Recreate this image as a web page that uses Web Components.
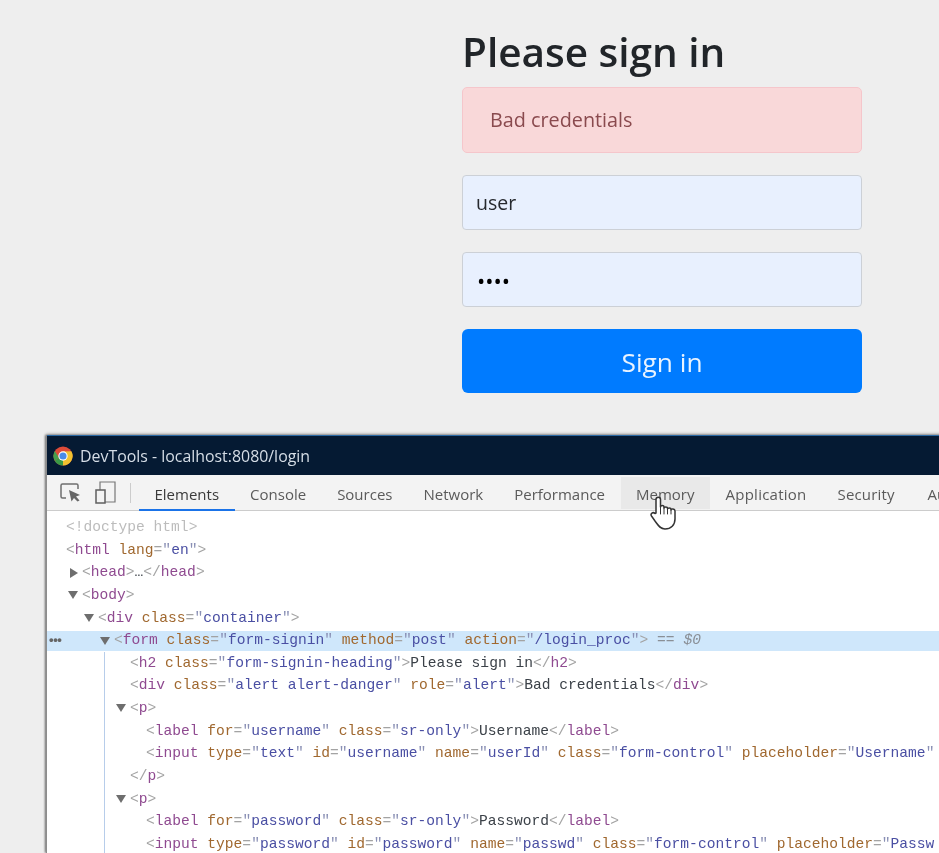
<!doctype html>
<html lang="en">
<head>
<meta charset="utf-8">
<title>Please sign in</title>
<style>
html,body{margin:0;height:853px;overflow:hidden;background:#eee}
body{font-family:"Open Sans","Noto Sans",sans-serif;width:939px}
</style>
</head>
<body>
<login-page>
  <sign-in-form>
    <form-heading>Please sign in</form-heading>
    <alert-box>Bad credentials</alert-box>
    <text-field>user</text-field>
    <text-field dots>••••</text-field>
    <primary-button>Sign in</primary-button>
  </sign-in-form>
  <devtools-window>
    <title-bar>DevTools - localhost:8080/login</title-bar>
    <tab-strip>
      <dev-tab active>Elements</dev-tab><dev-tab>Console</dev-tab><dev-tab>Sources</dev-tab><dev-tab>Network</dev-tab><dev-tab>Performance</dev-tab><dev-tab hover>Memory</dev-tab><dev-tab style="letter-spacing:.25px">Application</dev-tab><dev-tab style="letter-spacing:.15px">Security</dev-tab><dev-tab style="padding-left:17.5px">Audits</dev-tab>
    </tab-strip>
    <dom-tree>
      <dom-line depth="0" muted code='&lt;!doctype html&gt;'></dom-line>
      <dom-line depth="0" code='&lt;html lang="en"&gt;'></dom-line>
      <dom-line depth="1" arrow="right" code='&lt;head&gt;…&lt;/head&gt;'></dom-line>
      <dom-line depth="1" arrow="down" code='&lt;body&gt;'></dom-line>
      <dom-line depth="2" arrow="down" code='&lt;div class="container"&gt;'></dom-line>
      <dom-line depth="3" arrow="down" selected code='&lt;form class="form-signin" method="post" action="/login_proc"&gt;' suffix=' == $0'></dom-line>
      <dom-branch>
        <dom-line depth="0" code='&lt;h2 class="form-signin-heading"&gt;Please sign in&lt;/h2&gt;'></dom-line>
        <dom-line depth="0" code='&lt;div class="alert alert-danger" role="alert"&gt;Bad credentials&lt;/div&gt;'></dom-line>
        <dom-line depth="0" arrow="down" code='&lt;p&gt;'></dom-line>
        <dom-line depth="1" code='&lt;label for="username" class="sr-only"&gt;Username&lt;/label&gt;'></dom-line>
        <dom-line depth="1" code='&lt;input type="text" id="username" name="userId" class="form-control" placeholder="Username"'></dom-line>
        <dom-line depth="0" code='&lt;/p&gt;'></dom-line>
        <dom-line depth="0" arrow="down" code='&lt;p&gt;'></dom-line>
        <dom-line depth="1" code='&lt;label for="password" class="sr-only"&gt;Password&lt;/label&gt;'></dom-line>
        <dom-line depth="1" code='&lt;input type="password" id="password" name="passwd" class="form-control" placeholder="Passw'></dom-line>
      </dom-branch>
    </dom-tree>
    <hand-cursor></hand-cursor>
  </devtools-window>
</login-page>
<script>
function define(name, css, html, setup){
  customElements.define(name, class extends HTMLElement{
    constructor(){super();this.attachShadow({mode:'open'}).innerHTML='<style>'+css+'</style>'+html;}
    connectedCallback(){ if(setup) setup.call(this,this.shadowRoot); }
  });
}
define('login-page',':host{display:block;height:853px;overflow:hidden;filter:blur(.35px)}','<slot></slot>');
define('sign-in-form',':host{display:flex;flex-direction:column;width:400px;margin-left:462px;height:435px;color:#212529}','<slot></slot>');
define('form-heading',':host{display:block;height:87px;box-sizing:border-box;padding-top:22px;font-size:40.5px;line-height:60px;font-weight:560;color:#212529;white-space:nowrap}','<slot></slot>');
define('alert-box',':host{display:flex;align-items:center;box-sizing:border-box;height:66px;margin-bottom:22px;padding:0 0 2px 27px;background:#f9d8d9;border:1px solid #f5c6cb;border-radius:5px;color:#8a4a4e;font-size:19.8px}','<slot></slot>');
define('text-field',':host{display:flex;align-items:center;box-sizing:border-box;height:55px;margin-bottom:22px;padding:0 0 0 13px;background:#e8f0fe;border:1px solid #ccd0d6;border-radius:4px;color:#26292e;font-size:19.5px}:host([dots]){color:#000;font-size:22px;padding-left:14px}','<slot></slot>');
define('primary-button',':host{display:flex;align-items:center;justify-content:center;box-sizing:border-box;height:64px;background:#007bff;border-radius:6px;color:#e9f3ff;font-size:26.3px;padding-top:1px}','<slot></slot>');
define('devtools-window',':host{display:block;position:relative;margin-left:46px;width:1000px;height:418px;background:#fff;border-left:1px solid #8d8d8d;box-shadow:-1px 0 2px rgba(0,0,0,.45),0 -1px 3px rgba(0,0,0,.3)}','<slot></slot>');
define('title-bar',`:host{display:flex;align-items:center;height:40px;box-sizing:border-box;border-top:1px solid #2b6aa6;background:#051a33;color:#d5dde6;font-size:15.9px;padding-left:6px;gap:7px;white-space:nowrap}svg{width:20px;height:20px;flex:none}`,
`<svg viewBox="0 0 24 24"><circle cx="12" cy="12" r="11.5" fill="#dd4b39"/><path d="M12 12L2.04 17.75A11.5 11.5 0 0 0 12 23.5z" fill="#3a9a46"/><path d="M12 12V23.5A11.5 11.5 0 0 0 22 6.25L12 6.5z" fill="#f2c230"/><path d="M12 12L2.04 17.75A11.5 11.5 0 0 1 2.2 6 L7 14z" fill="#46a04d"/><circle cx="12" cy="12" r="5.6" fill="#fff"/><circle cx="12" cy="12" r="4.3" fill="#4a8be8"/></svg><slot></slot>`);
define('tab-strip',`:host{display:flex;align-items:stretch;height:36px;box-sizing:border-box;background:#f3f3f3;border-bottom:1px solid #ccc}
.tools{display:flex;align-items:center;width:92px;flex:none;box-sizing:border-box}
.tools svg{flex:none;display:block}
.sep{width:1px;height:20px;background:#ccc;margin-left:14px}
.tabs{display:flex;flex:none}`,
`<div class="tools">
<svg style="margin-left:13px" width="21" height="19" viewBox="0 0 21 19" fill="none"><path d="M6 15H2.500Q1 15 1 13.500V2.500Q1 1 2.500 1H16.500Q18 1 18 2.500V6" stroke="#6f6f6f" stroke-width="1.500"/><path d="M9 7L20 12L16 13.500L19.500 17.500L17.500 18.500L14 15L11.500 18.500z" fill="#666"/></svg>
<svg style="margin-left:14px" width="21" height="23" viewBox="0 0 21 23" fill="none"><path d="M5 9V1H20V21H10" stroke="#777" stroke-width="1.200"/><rect x="1" y="9" width="9" height="13" stroke="#5f5f5f" stroke-width="1.500"/></svg>
<div class="sep"></div></div><div class="tabs"><slot></slot></div>`);
define('dev-tab',`:host{display:flex;align-items:center;padding:2px 15.5px 0;box-sizing:border-box;height:36px;color:#5a5a5a;font-size:15px;white-space:nowrap}
:host([active]){box-shadow:inset 0 -2px 0 #1a73e8;color:#3a3a3a}
:host([hover]){background:linear-gradient(transparent 2px,#e9e9e9 2px,#e9e9e9 34px,transparent 34px)}`,'<slot></slot>');
define('dom-tree',':host{display:block;padding-top:5px;font-family:"Liberation Mono",monospace;font-size:14.6px;line-height:22.65px}','<slot></slot>');
define('dom-branch',':host{display:block;margin-left:57px;border-left:1px solid #b7cdea;--base:11px}','<slot></slot>');
function esc(s){return s.replace(/&/g,'&amp;').replace(/</g,'&lt;').replace(/>/g,'&gt;');}
function tokenize(code){
  return code.replace(/<[^>]*>?|[^<]+/g,function(part){
    if(part[0]!=='<') return '<span class="txt">'+esc(part)+'</span>';
    var closed=part.slice(-1)==='>';
    if(closed) part=part.slice(0,-1);
    var m=part.match(/^(<\/?!?)([\w-]+)(.*)$/);
    var attrs=m[3].replace(/(\s+)([\w-]+)(?:(=)("[^"]*"?))?/g,function(a,sp,n,eq,v){
      var out=sp+'<span class="an">'+n+'</span>';
      if(eq){
        var end=v.length>1&&v.slice(-1)==='"';
        out+='<span class="br">=</span><span class="qt">"</span><span class="av">'+esc(end?v.slice(1,-1):v.slice(1))+'</span>'+(end?'<span class="qt">"</span>':'');
      }
      return out;
    });
    return '<span class="br">'+esc(m[1])+'</span><span class="tg">'+m[2]+'</span>'+attrs+(closed?'<span class="br">&gt;</span>':'');
  });
}
define('dom-line',`:host{display:flex;align-items:center;height:22.65px;position:relative;white-space:pre}
:host([selected]){background:linear-gradient(transparent 1.5px,#cfe7fb 1.5px,#cfe7fb 21.5px,transparent 21.5px)}
.arrow{width:14px;flex:none;height:10px;display:block}
.br{color:#a3a3a3}.tg{color:#8f4a90}.an{color:#a0682f}.av{color:#4a4fa3}.qt{color:#8a90b5}.txt{color:#3b4148}
.suf{color:#8a8f96}.suf i{color:#8a8f96}
.dots{position:absolute;left:2px;top:0;color:#666;font:bold 13px "Liberation Sans",sans-serif;line-height:22px;letter-spacing:-.4px}
:host([muted]) span{color:#bcbcbc}`,
`<svg class="arrow" viewBox="0 0 14 10"></svg><span class="code"></span>`,
function(root){
  var depth=+this.getAttribute('depth')||0;
  this.style.paddingLeft='calc(var(--base,5px) + '+(depth*16)+'px)';
  root.querySelector('.code').innerHTML=tokenize(this.getAttribute('code'))+(this.hasAttribute('suffix')?'<span class="suf"> == <i>$0</i></span>':'');
  var a=this.getAttribute('arrow'),svg=root.querySelector('svg');
  if(a==='down') svg.innerHTML='<path d="M0 1H10L5 9z" fill="#6e6e6e"/>';
  if(a==='right') svg.innerHTML='<path d="M2 0V10L10 5z" fill="#6e6e6e"/>';
  if(this.hasAttribute('selected')){var d=document.createElement('span');d.className='dots';d.textContent='•••';root.appendChild(d);}
});
define('hand-cursor',':host{position:absolute;left:603px;top:61px;width:26px;height:34px;display:block}svg{display:block}',
`<svg width="26" height="34" viewBox="0 0 26 34" fill="#fff" stroke="#333" stroke-width="1.500" stroke-linejoin="round" stroke-linecap="round"><path d="M6 17V3.500C6 .5 10.500 .5 10.500 3.500V11C10.500 9 14 9 14 11V12C14 10.500 17.500 10.500 17.500 12V13C17.500 11.500 21 11.500 21 13V14C21 12.500 25 12.500 25 15V23C25 29 21 33 15 33C10 33 8 29 5 25L1.500 20C0 17.500 3 15.500 5 17.500z"/><path d="M10.500 11V18M14 12V18M17.500 13V18M21 14V18" stroke-width="1"/></svg>`);
</script>
</body>
</html>
